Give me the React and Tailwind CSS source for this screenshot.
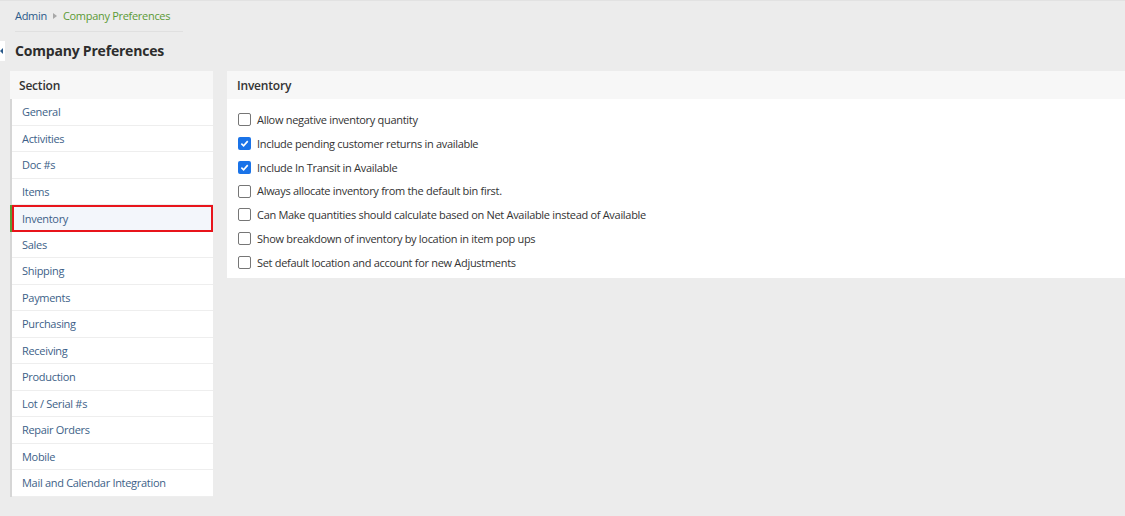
import React from "react";

const sections = [
  "General",
  "Activities",
  "Doc #s",
  "Items",
  "Inventory",
  "Sales",
  "Shipping",
  "Payments",
  "Purchasing",
  "Receiving",
  "Production",
  "Lot / Serial #s",
  "Repair Orders",
  "Mobile",
  "Mail and Calendar Integration",
];

const options = [
  { label: "Allow negative inventory quantity", checked: false },
  { label: "Include pending customer returns in available", checked: true },
  { label: "Include In Transit in Available", checked: true },
  { label: "Always allocate inventory from the default bin first.", checked: false },
  {
    label: "Can Make quantities should calculate based on Net Available instead of Available",
    checked: false,
  },
  { label: "Show breakdown of inventory by location in item pop ups", checked: false },
  { label: "Set default location and account for new Adjustments", checked: false },
];

function Checkbox({ checked }) {
  if (checked) {
    return (
      <span className="flex h-[13px] w-[13px] shrink-0 items-center justify-center rounded-[2px] bg-[#1a73e8]">
        <svg width="9" height="9" viewBox="0 0 10 10">
          <path d="M1.5 5.2 L4 7.6 L8.6 2.4" fill="none" stroke="#fff" strokeWidth="1.8" />
        </svg>
      </span>
    );
  }
  return (
    <span className="h-[13px] w-[13px] shrink-0 rounded-[2px] border border-[#767676] bg-white" />
  );
}

export default function App() {
  return (
    <div
      className="relative min-h-[516px] w-[1125px] overflow-hidden bg-[#ececec] text-[#333]"
      style={{ fontFamily: '"Open Sans", sans-serif' }}
    >
      <div className="h-px bg-[#e2e2e2]" />

      {/* breadcrumb */}
      <div className="ml-[15px] flex h-[31px] w-[168px] items-center gap-[6px] whitespace-nowrap border-b border-[#e0e0e0] text-[11px] tracking-[-0.3px]">
        <span className="text-[#2b5a8a]">Admin</span>
        <span className="h-0 w-0 border-y-[3px] border-l-[4px] border-y-transparent border-l-[#a8a8a8]" />
        <span className="text-[#5b9a35]">Company Preferences</span>
      </div>

      {/* side toggle tab */}
      <div className="absolute left-0 top-[41px] flex h-[20px] w-[5px] items-center justify-start bg-white">
        <span className="h-0 w-0 border-y-[3px] border-r-[3px] border-y-transparent border-r-[#2b5a8a]" />
      </div>

      <h1 className="ml-[15px] mt-[8px] text-[14px] font-bold leading-[22px] tracking-[-0.2px] text-[#2d2d2d]">
        Company Preferences
      </h1>

      <div className="mt-[9px] flex items-start gap-[14px] pl-[10px]">
        {/* sections */}
        <div className="w-[203px] shrink-0">
          <div className="flex h-[28px] items-center bg-[#f7f7f7] pl-[9px] pt-[1px] text-[12px] font-semibold tracking-[-0.2px] text-[#333]">
            Section
          </div>
          <div className="border-l-[2px] border-[#d6d6d6] bg-white">
            {sections.map((s) => {
              const active = s === "Inventory";
              return (
                <div
                  key={s}
                  className={
                    active
                      ? "relative flex h-[26.5px] items-center border-[2px] border-[#e8141b] bg-[#f3f6fb] pl-[8px] pt-[1px] text-[11px] tracking-[-0.3px] text-[#3d5f88]"
                      : "flex h-[26.5px] items-center border-b border-[#eeeeee] pl-[10px] pt-[1px] text-[11px] tracking-[-0.3px] text-[#3d5f88]"
                  }
                >
                  {active && (
                    <span className="absolute -left-[4px] -top-[2px] h-[26.5px] w-[2px] bg-[#5b9a35]" />
                  )}
                  {s}
                </div>
              );
            })}
          </div>
        </div>

        {/* content */}
        <div className="flex-1">
          <div className="flex h-[28px] items-center bg-[#f7f7f7] pl-[10px] pt-[1px] text-[12px] font-semibold tracking-[-0.2px] text-[#333]">
            Inventory
          </div>
          <div className="flex flex-col gap-[10.3px] bg-white px-[11px] pb-[9px] pt-[14px]">
            {options.map((o) => (
              <div
                key={o.label}
                className="flex items-center gap-[6px] text-[11px] leading-[13.5px] tracking-[-0.3px] text-[#333]"
              >
                <Checkbox checked={o.checked} />
                <span>{o.label}</span>
              </div>
            ))}
          </div>
        </div>
      </div>
    </div>
  );
}
